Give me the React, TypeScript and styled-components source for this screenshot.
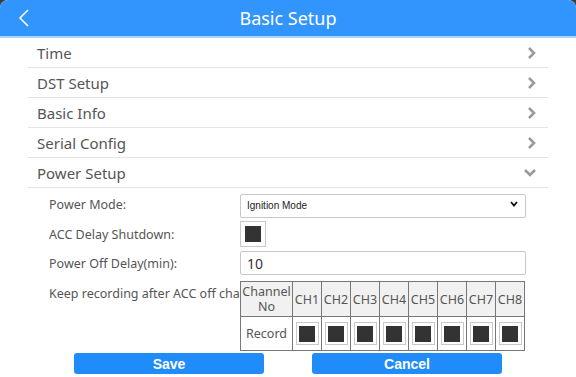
import React from "react";
import styled, { createGlobalStyle } from "styled-components";

const GlobalStyle = createGlobalStyle`
  html, body {
    margin: 0;
    padding: 0;
    background: #3a3a3a;
  }
  body {
    font-family: "Noto Sans", "Open Sans", sans-serif;
    color: #555;
  }
  * {
    box-sizing: border-box;
  }
`;

const Page = styled.div`
  width: 576px;
  height: 377px;
  background: #fff;
  border-radius: 8px 8px 0 0;
  overflow: hidden;
`;

const Header = styled.div`
  height: 38px;
  background: #3295fd;
  border-bottom: 2px solid #a9d5f8;
  display: flex;
  align-items: center;
  justify-content: center;
  position: relative;
`;

const Title = styled.h1`
  margin: 0;
  font-size: 18px;
  font-weight: 400;
  color: #fff;
  line-height: 36px;
`;

const BackButton = styled.button`
  position: absolute;
  left: 14px;
  top: 6px;
  width: 20px;
  height: 24px;
  border: 0;
  padding: 0;
  background: none;
  display: flex;
  align-items: center;
  justify-content: center;
`;

const Menu = styled.div`
  margin: 0 28px;
`;

const MenuRow = styled.div`
  height: 30px;
  border-bottom: 1px solid #e4e4e4;
  display: flex;
  align-items: center;
  justify-content: space-between;
  padding: 0 11px 0 9px;
  font-size: 15px;
  color: #555;
`;

const Form = styled.div`
  padding: 4px 0 0 49px;
  display: flex;
  flex-direction: column;
`;

const FormRow = styled.div<{ $gap: number; $top?: boolean }>`
  display: flex;
  align-items: ${(p) => (p.$top ? "flex-start" : "center")};
  margin-bottom: ${(p) => p.$gap}px;
`;

const Label = styled.div<{ $pad?: number }>`
  width: 191px;
  flex: none;
  padding-top: ${(p) => p.$pad ?? 0}px;
  font-size: 12.5px;
  color: #555;
  white-space: nowrap;
  overflow: hidden;
`;

const SelectWrap = styled.div`
  position: relative;
  width: 286px;
  height: 24px;
`;

const Select = styled.select`
  appearance: none;
  width: 100%;
  height: 100%;
  border: 1px solid #c8c8c8;
  border-radius: 2px;
  background: #fff;
  padding: 0 0 0 6px;
  font-family: "Liberation Sans", Arial, sans-serif;
  font-size: 10px;
  color: #222;
`;

const SelectArrow = styled.svg`
  position: absolute;
  right: 8px;
  top: 9px;
  pointer-events: none;
`;

const CheckBox = styled.div<{ $size: number; $inner: number }>`
  width: ${(p) => p.$size}px;
  height: ${(p) => p.$size}px;
  border: 1px solid #c9c9c9;
  background: #fff;
  display: flex;
  align-items: center;
  justify-content: center;
  &::after {
    content: "";
    width: ${(p) => p.$inner}px;
    height: ${(p) => p.$inner}px;
    background: #333;
  }
`;

const TextInput = styled.input`
  width: 286px;
  height: 24px;
  border: 1px solid #c8c8c8;
  border-radius: 2px;
  padding: 0 6px;
  font-family: "Noto Sans", sans-serif;
  font-size: 14px;
  color: #333;
  outline: none;
`;

const Table = styled.table`
  border-collapse: collapse;
  background: #fff;
  font-size: 12.5px;
  color: #555;
`;

const HeadCell = styled.th<{ $w: number }>`
  width: ${(p) => p.$w}px;
  height: 35px;
  border: 1px solid #777;
  background: #f1f1f1;
  font-weight: 400;
  line-height: 15px;
  padding: 0;
`;

const Cell = styled.td`
  height: 34px;
  border: 1px solid #777;
  background: #fff;
  text-align: center;
  padding: 0;
  & > div {
    margin: 0 auto;
  }
`;

const Buttons = styled.div`
  display: flex;
  justify-content: center;
  gap: 48px;
  margin-top: 2px;
`;

const ActionButton = styled.button`
  width: 190px;
  height: 21px;
  border: 0;
  border-radius: 3px;
  background: #1f8cf9;
  color: #fff;
  font-family: "Liberation Sans", Arial, sans-serif;
  font-weight: 700;
  font-size: 14px;
  padding: 0;
`;

const ChevronRight = () => (
  <svg width="10" height="14" viewBox="0 0 10 14">
    <polyline points="2,2 7,7 2,12" fill="none" stroke="#9a9a9a" strokeWidth="2.6" />
  </svg>
);

const ChevronDown = () => (
  <svg width="14" height="10" viewBox="0 0 14 10">
    <polyline points="2,2 7,7 12,2" fill="none" stroke="#9a9a9a" strokeWidth="2.6" />
  </svg>
);

const menuItems = ["Time", "DST Setup", "Basic Info", "Serial Config"];
const channels = ["CH1", "CH2", "CH3", "CH4", "CH5", "CH6", "CH7", "CH8"];

export default function App() {
  return (
    <Page>
      <GlobalStyle />
      <Header>
        <BackButton>
          <svg width="12" height="18" viewBox="0 0 12 18">
            <polyline points="10,1 2,9 10,17" fill="none" stroke="#fff" strokeWidth="1.6" />
          </svg>
        </BackButton>
        <Title>Basic Setup</Title>
      </Header>
      <Menu>
        {menuItems.map((m) => (
          <MenuRow key={m}>
            {m}
            <ChevronRight />
          </MenuRow>
        ))}
        <MenuRow>
          Power Setup
          <ChevronDown />
        </MenuRow>
      </Menu>
      <Form>
        <FormRow $gap={5}>
          <Label>Power Mode:</Label>
          <SelectWrap>
            <Select defaultValue="ignition">
              <option value="ignition">Ignition Mode</option>
              <option value="timer">Timer Mode</option>
            </Select>
            <SelectArrow width="8" height="6" viewBox="0 0 8 6">
              <polyline points="1,1 4,4.5 7,1" fill="none" stroke="#111" strokeWidth="1.8" />
            </SelectArrow>
          </SelectWrap>
        </FormRow>
        <FormRow $gap={4}>
          <Label>ACC Delay Shutdown:</Label>
          <CheckBox $size={26} $inner={16} />
        </FormRow>
        <FormRow $gap={6}>
          <Label>Power Off Delay(min):</Label>
          <TextInput defaultValue="10" />
        </FormRow>
        <FormRow $gap={0} $top>
          <Label $pad={4}>Keep recording after ACC off channel:</Label>
          <Table>
            <thead>
              <tr>
                <HeadCell $w={52}>
                  Channel
                  <br />
                  No
                </HeadCell>
                {channels.map((c) => (
                  <HeadCell key={c} $w={29}>
                    {c}
                  </HeadCell>
                ))}
              </tr>
            </thead>
            <tbody>
              <tr>
                <Cell>Record</Cell>
                {channels.map((c) => (
                  <Cell key={c}>
                    <CheckBox $size={23} $inner={16} />
                  </Cell>
                ))}
              </tr>
            </tbody>
          </Table>
        </FormRow>
      </Form>
      <Buttons>
        <ActionButton>Save</ActionButton>
        <ActionButton>Cancel</ActionButton>
      </Buttons>
    </Page>
  );
}
